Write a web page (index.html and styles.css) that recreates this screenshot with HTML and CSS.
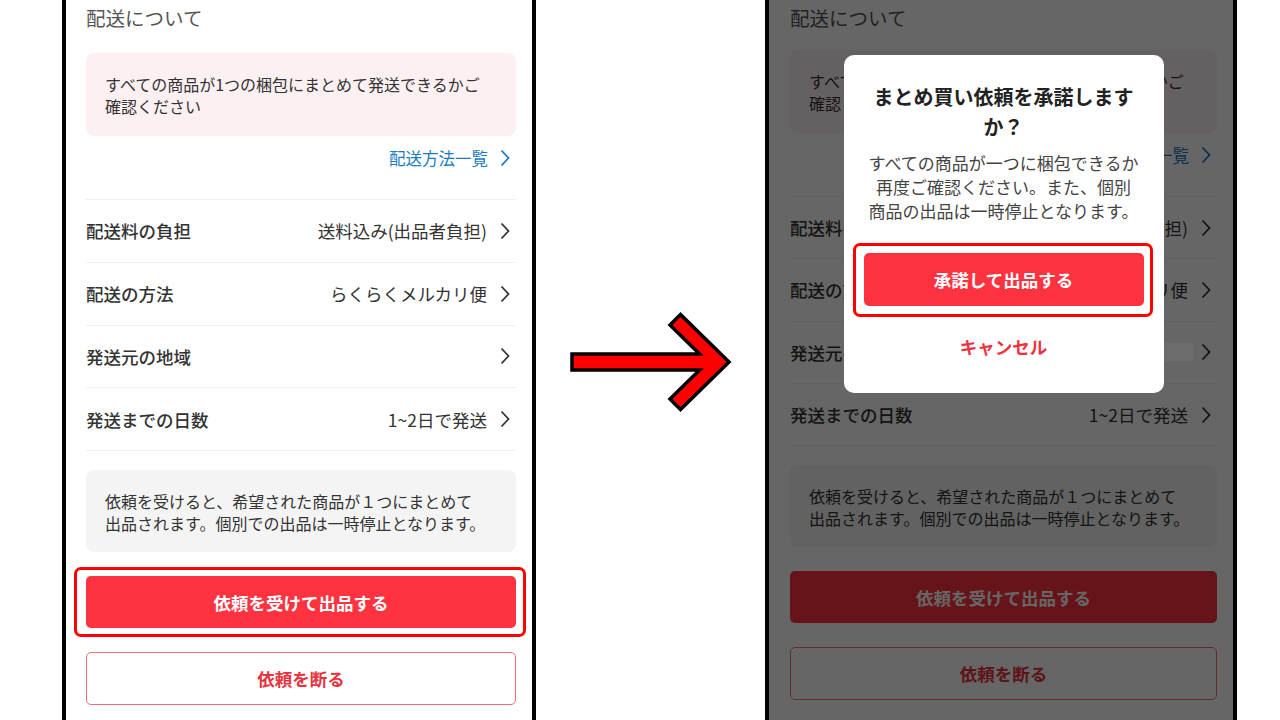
FILE: index.html
```html
<!DOCTYPE html>
<html lang="ja">
<head>
<meta charset="UTF-8" />
<title>まとめ買い依頼</title>
<link rel="stylesheet" href="styles.css">
</head>
<body>
  <div class="stage">

    <!-- before: request screen -->
    <section class="phone">
      <div class="screen">
        <h2 class="sec-title">配送について</h2>
        <div class="notice">すべての商品が1つの梱包にまとめて発送できるかご<br>確認ください</div>
        <a class="more-link">配送方法一覧
          <svg class="chev" viewBox="0 0 10 18"><polyline points="1.5,1.5 8.5,9 1.5,16.5" /></svg>
        </a>
        <ul class="rows">
          <li class="row"><span class="row-label">配送料の負担</span><span class="row-value">送料込み(出品者負担)</span><svg class="chev" viewBox="0 0 10 18"><polyline points="1.5,1.5 8.5,9 1.5,16.5" /></svg></li>
          <li class="row"><span class="row-label">配送の方法</span><span class="row-value">らくらくメルカリ便</span><svg class="chev" viewBox="0 0 10 18"><polyline points="1.5,1.5 8.5,9 1.5,16.5" /></svg></li>
          <li class="row"><span class="row-label">発送元の地域</span><span class="row-value masked"></span><svg class="chev" viewBox="0 0 10 18"><polyline points="1.5,1.5 8.5,9 1.5,16.5" /></svg></li>
          <li class="row"><span class="row-label">発送までの日数</span><span class="row-value">1~2日で発送</span><svg class="chev" viewBox="0 0 10 18"><polyline points="1.5,1.5 8.5,9 1.5,16.5" /></svg></li>
        </ul>
        <div class="info">依頼を受けると、希望された商品が１つにまとめて<br>出品されます。個別での出品は一時停止となります。</div>
        <div class="mark">
          <button class="btn btn-primary">依頼を受けて出品する</button>
        </div>
        <button class="btn btn-outline">依頼を断る</button>
      </div>
    </section>

    <div class="between">
      <svg class="arrow" viewBox="0 0 229 720" width="229" height="720">
        <polygon points="36,354 163.6,354 134,325 144.5,314.4 193,362 144.5,409.6 134,399 163.6,370 36,370" />
      </svg>
    </div>

    <!-- after: confirm dialog -->
    <section class="phone phone--dim">
      <div class="screen">
        <h2 class="sec-title">配送について</h2>
        <div class="notice">すべての商品が1つの梱包にまとめて発送できるかご<br>確認ください</div>
        <a class="more-link">配送方法一覧
          <svg class="chev" viewBox="0 0 10 18"><polyline points="1.5,1.5 8.5,9 1.5,16.5" /></svg>
        </a>
        <ul class="rows">
          <li class="row"><span class="row-label">配送料の負担</span><span class="row-value">送料込み(出品者負担)</span><svg class="chev" viewBox="0 0 10 18"><polyline points="1.5,1.5 8.5,9 1.5,16.5" /></svg></li>
          <li class="row"><span class="row-label">配送の方法</span><span class="row-value">らくらくメルカリ便</span><svg class="chev" viewBox="0 0 10 18"><polyline points="1.5,1.5 8.5,9 1.5,16.5" /></svg></li>
          <li class="row"><span class="row-label">発送元の地域</span><span class="row-value masked"></span><svg class="chev" viewBox="0 0 10 18"><polyline points="1.5,1.5 8.5,9 1.5,16.5" /></svg></li>
          <li class="row"><span class="row-label">発送までの日数</span><span class="row-value">1~2日で発送</span><svg class="chev" viewBox="0 0 10 18"><polyline points="1.5,1.5 8.5,9 1.5,16.5" /></svg></li>
        </ul>
        <div class="info">依頼を受けると、希望された商品が１つにまとめて<br>出品されます。個別での出品は一時停止となります。</div>
        <div class="mark mark--plain">
          <button class="btn btn-primary">依頼を受けて出品する</button>
        </div>
        <button class="btn btn-outline">依頼を断る</button>
      </div>

      <div class="overlay">
        <div class="dialog" role="dialog">
          <h3 class="dialog-title">まとめ買い依頼を承諾します<br>か？</h3>
          <p class="dialog-text">すべての商品が一つに梱包できるか<br>再度ご確認ください。また、個別<br>商品の出品は一時停止となります。</p>
          <div class="mark mark--dialog">
            <button class="btn btn-primary btn-dialog">承諾して出品する</button>
          </div>
          <button class="btn btn-cancel">キャンセル</button>
        </div>
      </div>
    </section>

  </div>
</body>
</html>
```

FILE: styles.css
```css
/* Reset & base */
*, *::before, *::after {
  box-sizing: border-box;
}
html, body {
  margin: 0;
  width: 100%;
  height: 100%;
  background: #fff;
  font-family: "Noto Sans CJK JP", "Noto Sans", sans-serif;
  color: #333;
  overflow: hidden;
}

.stage {
  display: flex;
  height: 720px;
  padding-left: 62px;
}

/* phone frames */
.phone {
  position: relative;
  flex: none;
  width: 474px;
  height: 720px;
  border-left: 4px solid #000;
  border-right: 4px solid #000;
  background: #fff;
  overflow: hidden;
}
.phone--dim {
  width: 472px;
}

.screen {
  padding: 4px 16px 0 20px;
}
.phone--dim .screen {
  padding-left: 21px;
}

.sec-title {
  margin: 0;
  font-size: 19.5px;
  line-height: 28px;
  font-weight: 400;
  color: #555;
}

.notice {
  margin-top: 21px;
  padding: 20px 19px 19px;
  background: #fdf0f2;
  border-radius: 8px;
  font-size: 16px;
  line-height: 22px;
  color: #333;
}
.phone--dim .notice {
  margin-top: 18px;
}

.more-link {
  display: flex;
  justify-content: flex-end;
  align-items: center;
  gap: 12px;
  height: 24px;
  margin-top: 10px;
  padding-right: 6px;
  font-size: 16.5px;
  color: #1a7bc4;
}

.chev {
  flex: none;
  width: 10px;
  height: 18px;
  fill: none;
  stroke: #333;
  stroke-width: 1.8;
}
.more-link .chev {
  stroke: #1a7bc4;
}

/* rows */
.rows {
  list-style: none;
  margin: 29px 0 0;
  padding: 0;
  border-bottom: 1px solid #efefef;
}
.row {
  display: flex;
  align-items: center;
  height: 62.75px;
  padding-right: 6px;
  border-top: 1px solid #efefef;
  font-size: 17.5px;
}
.phone--dim .row {
  height: 62.3px;
}
.row-label {
  flex: 1;
  font-weight: 500;
  color: #333;
}
.row-value {
  margin-right: 13px;
  color: #333;
}
.row-value.masked {
  position: relative;
  z-index: 2;
  width: 96px;
  height: 18px;
  margin-right: 8px;
  background: rgba(255, 255, 255, 0.05);
}

.info {
  margin-top: 19px;
  padding: 20px 19px 18px;
  background: #f4f4f4;
  border-radius: 8px;
  font-size: 16px;
  line-height: 22px;
  color: #333;
}

/* buttons */
.btn {
  display: block;
  width: 100%;
  height: 52px;
  border-radius: 5px;
  font-family: "Noto Sans CJK JP", "Noto Sans", sans-serif;
  font-size: 17.5px;
  font-weight: 700;
  cursor: pointer;
}
.btn-primary {
  border: none;
  background: #ff3340;
  color: #fff;
}
.btn-outline {
  height: 53px;
  margin-top: 24px;
  border: 1px solid #ef6f78;
  background: #fff;
  color: #e8333f;
}

/* red annotation frame */
.mark {
  position: relative;
  margin-top: 24px;
}
.mark::after {
  content: '';
  position: absolute;
  top: -9px;
  bottom: -9px;
  left: -12px;
  right: -10px;
  border: 3px solid #f00;
  border-radius: 7px;
}
.mark--plain::after {
  display: none;
}

/* arrow column */
.between {
  flex: none;
  width: 229px;
}
.arrow polygon {
  fill: #f00;
  stroke: #000;
  stroke-width: 3.5;
  stroke-linejoin: miter;
}

/* dialog */
.overlay {
  position: absolute;
  inset: 0;
  z-index: 1;
  display: flex;
  justify-content: center;
  align-items: flex-start;
  padding: 55px 16px 0 21px;
  background: rgba(0, 0, 0, 0.6);
}
.dialog {
  width: 320px;
  padding: 27px 20px 23px;
  background: #fff;
  border-radius: 10px;
  text-align: center;
}
.dialog-title {
  margin: 0;
  font-size: 20px;
  line-height: 30px;
  font-weight: 700;
  color: #222;
}
.dialog-text {
  margin: 9px 0 0;
  font-size: 17px;
  line-height: 24px;
  color: #444;
}
.mark--dialog {
  margin-top: 30px;
}
.mark--dialog::after {
  top: -10px;
  bottom: -11px;
  left: -11px;
  right: -9px;
}
.btn-dialog {
  height: 53px;
}
.btn-cancel {
  height: 48px;
  margin-top: 16px;
  border: none;
  background: none;
  color: #f0333f;
}
```
